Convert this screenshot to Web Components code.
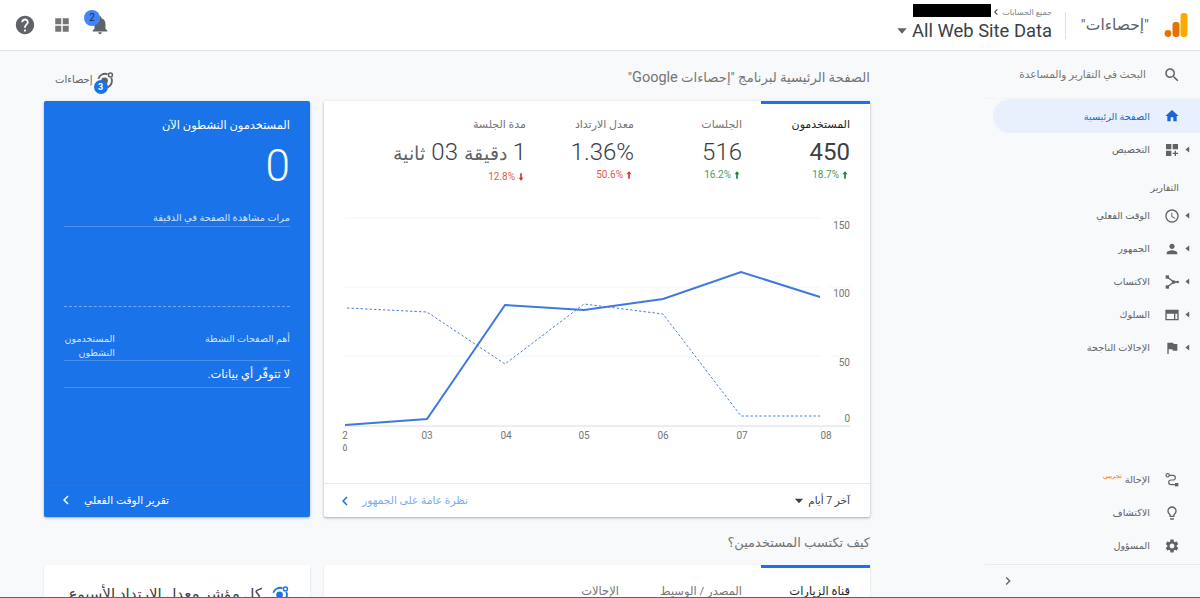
<!DOCTYPE html>
<html lang="ar" dir="rtl">
<head>
<meta charset="utf-8">
<title>Analytics</title>
<style>
  html, body { margin: 0; height: 100%; overflow: hidden; }
  body { font-family: Roboto, "DejaVu Sans", sans-serif; color: #5f6368; background: #f8f9fa; }
</style>
</head>
<body>
<ga-app></ga-app>

<script>
const ICONS = {
  help: '<path d="M12 2C6.48 2 2 6.48 2 12s4.48 10 10 10 10-4.48 10-10S17.52 2 12 2zm1 17h-2v-2h2v2zm2.07-7.75l-.9.92C13.45 12.9 13 13.5 13 15h-2v-.5c0-1.1.45-2.1 1.17-2.83l1.24-1.26c.37-.36.59-.86.59-1.41 0-1.1-.9-2-2-2s-2 .9-2 2H8c0-2.21 1.79-4 4-4s4 1.79 4 4c0 .88-.36 1.68-.93 2.25z"/>',
  apps: '<path d="M3 3h8v8H3zM13 3h8v8h-8zM3 13h8v8H3zM13 13h8v8h-8z"/>',
  bell: '<path d="M12 22c1.1 0 2-.9 2-2h-4c0 1.1.89 2 2 2zm6-6v-5c0-3.07-1.64-5.64-4.5-6.32V4c0-.83-.67-1.5-1.5-1.5s-1.5.67-1.5 1.5v.68C7.63 5.36 6 7.92 6 11v5l-2 2v1h16v-1l-2-2z"/>',
  search: '<path d="M15.5 14h-.79l-.28-.27C15.41 12.59 16 11.11 16 9.5 16 5.91 13.09 3 9.5 3S3 5.91 3 9.5 5.91 16 9.5 16c1.61 0 3.09-.59 4.23-1.57l.27.28v.79l5 4.99L20.49 19l-4.99-5zm-6 0C7.01 14 5 11.99 5 9.5S7.01 5 9.5 5 14 7.01 14 9.5 11.99 14 9.5 14z"/>',
  home: '<path d="M10 20v-6h4v6h5v-8h3L12 3 2 12h3v8z"/>',
  custom: '<path d="M3 3h8v8H3zM13 3h8v8h-8zM3 13h8v8H3zM18 13h-2v3h-3v2h3v3h2v-3h3v-2h-3z"/>',
  clock: '<path d="M11.99 2C6.47 2 2 6.48 2 12s4.47 10 9.99 10C17.52 22 22 17.52 22 12S17.52 2 11.99 2zM12 20c-4.42 0-8-3.58-8-8s3.58-8 8-8 8 3.58 8 8-3.58 8-8 8zm.5-13H11v6l5.25 3.15.75-1.23-4.5-2.67z"/>',
  person: '<path d="M12 12c2.21 0 4-1.79 4-4s-1.79-4-4-4-4 1.79-4 4 1.79 4 4 4zm0 2c-2.67 0-8 1.34-8 4v2h16v-2c0-2.66-5.33-4-8-4z"/>',
  acquire: '<rect x="2.5" y="2" width="5" height="5"/><rect x="2.5" y="17" width="5" height="5"/><circle cx="14.5" cy="12" r="2.8"/><circle cx="20.5" cy="12" r="2"/><path d="M5 4.5l9.5 7.5L5 19.5M14.5 12h6" fill="none" stroke="currentColor" stroke-width="2"/>',
  behavior: '<path d="M2 4h20v16H2zM4 10v8h11v-8zM17 10v8h3v-8z" fill-rule="evenodd"/>',
  flag: '<path d="M14.4 6L14 4H5v17h2v-7h5.6l.4 2h7V6z"/>',
  route: '<circle cx="5.5" cy="5" r="2.5" fill="none" stroke="currentColor" stroke-width="1.8"/><rect x="16.5" y="16.5" width="5" height="5"/><path d="M8 5h5.5a3.5 3.5 0 0 1 0 7h-3a3.5 3.5 0 0 0 0 7h6" fill="none" stroke="currentColor" stroke-width="1.8"/>',
  bulb: '<path d="M9 21c0 .55.45 1 1 1h4c.55 0 1-.45 1-1v-1H9v1zm3-19C8.14 2 5 5.14 5 9c0 2.38 1.19 4.47 3 5.74V17c0 .55.45 1 1 1h6c.55 0 1-.45 1-1v-2.26c1.81-1.27 3-3.36 3-5.74 0-3.86-3.14-7-7-7zm2.85 11.1l-.85.6V16h-4v-2.3l-.85-.6C7.8 12.16 7 10.63 7 9c0-2.76 2.24-5 5-5s5 2.24 5 5c0 1.63-.8 3.16-2.15 4.1z"/>',
  gear: '<path d="M19.14 12.94c.04-.3.06-.61.06-.94 0-.32-.02-.64-.07-.94l2.03-1.58c.18-.14.23-.41.12-.61l-1.92-3.32c-.12-.22-.37-.29-.59-.22l-2.39.96c-.5-.38-1.03-.7-1.62-.94l-.36-2.54c-.04-.24-.24-.41-.48-.41h-3.84c-.24 0-.43.17-.47.41l-.36 2.54c-.59.24-1.13.57-1.62.94l-2.39-.96c-.22-.08-.47 0-.59.22L2.74 8.87c-.12.21-.08.47.12.61l2.03 1.58c-.05.3-.09.63-.09.94s.02.64.07.94l-2.03 1.58c-.18.14-.23.41-.12.61l1.92 3.32c.12.22.37.29.59.22l2.39-.96c.5.38 1.03.7 1.62.94l.36 2.54c.05.24.24.41.48.41h3.84c.24 0 .44-.17.47-.41l.36-2.54c.59-.24 1.13-.56 1.62-.94l2.39.96c.22.08.47 0 .59-.22l1.92-3.32c.12-.22.07-.47-.12-.61l-2.01-1.58zM12 15.6c-1.98 0-3.6-1.62-3.6-3.6s1.62-3.6 3.6-3.6 3.6 1.62 3.6 3.6-1.62 3.6-3.6 3.6z"/>',
  left: '<path d="M15.4 7.4L14 6l-6 6 6 6 1.4-1.4L10.8 12z"/>',
  right: '<path d="M8.6 16.6L10 18l6-6-6-6-1.4 1.4L13.2 12z"/>',
  caret: '<path d="M5 8h14l-7 8z"/>',
  up: '<path d="M12 3l6 7h-4v11h-4V10H6z"/>',
  down: '<path d="M12 21l-6-7h4V3h4v11h4z"/>',
  insight: '<circle cx="11.5" cy="13" r="4"/><path d="M4 10.5A8.5 8.5 0 0 1 15 5M19.5 9.5A8.5 8.5 0 0 1 9 21" fill="none" stroke="currentColor" stroke-width="2.2"/><circle cx="18.5" cy="6" r="2.4" fill="none" stroke="currentColor" stroke-width="1.8"/>'
};

class GaIcon extends HTMLElement {
  constructor() {
    super();
    this.attachShadow({ mode: "open" });
  }
  connectedCallback() {
    const size = this.getAttribute("size") || "24";
    this.shadowRoot.innerHTML = `
      <style>
        :host { display: inline-flex; flex: none; width: ${size}px; height: ${size}px; }
        svg { width: 100%; height: 100%; fill: currentColor; display: block; }
      </style>
      <svg viewBox="0 0 24 24">${ICONS[this.getAttribute("name")] || ""}</svg>`;
  }
}

class GaHeader extends HTMLElement {
  constructor() {
    super();
    this.attachShadow({ mode: "open" });
    this.shadowRoot.innerHTML = `
      <style>
        :host { display: flex; align-items: center; height: 50px; background: #fff; border-bottom: 1px solid #dfe1e5; padding: 0 12px 0 14px; color: #5f6368; }
        .logo { width: 24px; height: 26px; margin-left: 15px; flex: none; }
        .product { font-size: 15.5px; color: #5f6368; width: 70px; white-space: nowrap; margin-left: 13px; margin-top: -1px; }
        .sep { width: 1px; height: 27px; background: #e0e0e0; margin-left: 13px; }
        .view { display: flex; flex-direction: column; height: 50px; }
        .crumb { display: flex; align-items: center; height: 13px; margin-top: 4px; font-size: 8px; color: #80868b; }
        .crumb span { margin-top: 3px; }
        .crumb i { display: block; width: 78px; height: 13px; background: #000; margin-right: -1px; }
        .crumb ga-icon { color: #3c4043; margin-top: 3px; }
        .name { display: flex; align-items: center; font-size: 18.4px; color: #3c4043; line-height: 22px; margin-top: 3px; white-space: nowrap; }
        .name span { direction: ltr; }
        .name ga-icon { color: #5f6368; margin-right: 2px; }
        .tools { margin-right: auto; display: flex; align-items: center; direction: ltr; }
        .tools ga-icon { color: #5f6368; }
        .bell { position: relative; margin-left: 17px; width: 24px; height: 24px; }
        .bell b { position: absolute; top: -3px; left: -4px; width: 16px; height: 16px; border-radius: 50%; background: #4285f4; color: #1a2a55; font: 400 10px/15px Roboto, sans-serif; text-align: center; }
      </style>
      <svg class="logo" viewBox="0 0 24 26">
        <rect x="16.5" y="1" width="7" height="24" rx="3" fill="#f9ab00"/>
        <rect x="8.5" y="10" width="7" height="15" rx="3" fill="#e37400"/>
        <circle cx="4" cy="21.5" r="3.4" fill="#e37400"/>
      </svg>
      <div class="product">"إحصاءات"</div>
      <div class="sep"></div>
      <div class="view">
        <div class="crumb"><span>جميع الحسابات</span><ga-icon name="left" size="12"></ga-icon><i></i></div>
        <div class="name"><span>All Web Site Data</span><ga-icon name="caret" size="16"></ga-icon></div>
      </div>
      <div class="tools">
        <ga-icon name="help" size="22"></ga-icon>
        <ga-icon name="apps" size="18" style="margin-left:17px;color:#757575"></ga-icon>
        <div class="bell"><ga-icon name="bell" size="22" style="margin:1px 0 0 1px"></ga-icon><b>2</b></div>
      </div>`;
  }
}

class GaNavItem extends HTMLElement {
  constructor() {
    super();
    this.attachShadow({ mode: "open" });
  }
  connectedCallback() {
    const a = (n) => this.getAttribute(n);
    const arrow = this.hasAttribute("expand") ? `<svg class="arrow" viewBox="0 0 6 8"><path d="M5 0.5v7L0.5 4z"/></svg>` : "";
    this.shadowRoot.innerHTML = `
      <style>
        :host { display: flex; align-items: center; height: 33px; position: relative; font-size: 9.7px; color: #5f6368; white-space: nowrap; padding-right: 20px; --ic: #5f6368; }
        :host([active]) { height: 34px; margin-left: 8px; background: #e8f0fe; border-radius: 17px 0 0 17px; color: #1967d2; --ic: #1967d2; }
        ga-icon { color: var(--ic); margin-left: 14px; }
        .arrow { position: absolute; right: 10px; top: 13px; width: 5px; height: 7px; fill: #5f6368; }
        sup { font-size: 6.5px; color: #e8710a; margin-right: 3px; position: relative; top: -4px; line-height: 0; vertical-align: baseline; }
      </style>
      ${arrow}<ga-icon name="${a("icon")}" size="16"></ga-icon><span><slot></slot></span>${a("tag") ? `<sup>${a("tag")}</sup>` : ""}`;
  }
}

class GaNav extends HTMLElement {
  constructor() {
    super();
    this.attachShadow({ mode: "open" });
    this.shadowRoot.innerHTML = `
      <style>
        :host { display: flex; flex-direction: column; width: 215px; flex: none; height: 546px; box-sizing: border-box; }
        .search { display: flex; align-items: center; height: 47px; padding: 1px 19px 0 0; font-size: 10.5px; color: #757575; border-bottom: 1px solid #f1f3f4; white-space: nowrap; margin-top: -1px; }
        .search ga-icon { color: #5f6368; margin-left: 17px; }
        .label { font-size: 9.5px; color: #5f6368; margin: 14px 21px 3px 0; height: 16px; line-height: 16px; }
        .bottom { margin-top: auto; }
        .collapse { border-top: 1px solid #e8eaed; height: 32px; display: flex; align-items: center; padding-left: 15px; margin-top: 2px; color: #5f6368; }
        .collapse ga-icon { margin-right: auto; }
      </style>
      <div class="search"><ga-icon name="search" size="18"></ga-icon><span>البحث في التقارير والمساعدة</span></div>
      <ga-nav-item icon="home" active>الصفحة الرئيسية</ga-nav-item>
      <ga-nav-item icon="custom" expand>التخصيص</ga-nav-item>
      <div class="label">التقارير</div>
      <ga-nav-item icon="clock" expand>الوقت الفعلي</ga-nav-item>
      <ga-nav-item icon="person" expand>الجمهور</ga-nav-item>
      <ga-nav-item icon="acquire" expand>الاكتساب</ga-nav-item>
      <ga-nav-item icon="behavior" expand>السلوك</ga-nav-item>
      <ga-nav-item icon="flag" expand>الإحالات الناجحة</ga-nav-item>
      <div class="bottom">
        <ga-nav-item icon="route" tag="تجريبي">الإحالة</ga-nav-item>
        <ga-nav-item icon="bulb">الاكتشاف</ga-nav-item>
        <ga-nav-item icon="gear">المسؤول</ga-nav-item>
        <div class="collapse"><ga-icon name="right" size="16"></ga-icon></div>
      </div>`;
  }
}

class GaMetric extends HTMLElement {
  constructor() {
    super();
    this.attachShadow({ mode: "open" });
  }
  connectedCallback() {
    const a = (n) => this.getAttribute(n);
    const colour = a("tone") === "up" ? "#188038" : "#d93025";
    this.shadowRoot.innerHTML = `
      <style>
        :host { display: block; width: 108px; flex: none; white-space: nowrap; }
        .label { font-size: 11px; line-height: 16px; height: 16px; color: #757575; }
        :host([selected]) .label { color: #202124; font-weight: 500; }
        .value { font-size: 24px; font-weight: 300; line-height: 28px; margin-top: 5px; color: #3c4043; }
        :host([selected]) .value { font-weight: 400; color: #3c4043; }
        .delta { display: flex; align-items: center; font-size: 10px; line-height: 12px; margin-top: 3px; color: ${colour}; }
        .delta span { opacity: .8; }
        .delta ga-icon { margin-left: 1px; }
      </style>
      <div class="label">${a("label")}</div>
      <div class="value"><slot></slot></div>
      <div class="delta"><ga-icon name="${a("arrow")}" size="10"></ga-icon><span>${a("delta")}</span></div>`;
  }
}

class GaChart extends HTMLElement {
  constructor() {
    super();
    this.attachShadow({ mode: "open" });
    // coordinates are page pixels, the viewBox shifts them to the card
    const solid = [[345,425],[427,419],[505,305],[584,310],[663,299],[741,272],[820,297]];
    const dashed = [[347,308],[427,312],[505,364],[584,304],[663,314],[741,416],[820,416]];
    const toPts = (l) => l.map((p) => p.join(",")).join(" ");
    const grid = [218, 287, 356].map((y) => `<line x1="345" x2="821" y1="${y}" y2="${y}" stroke="#f1f3f4"/>
      <line x1="830" x2="850" y1="${y}" y2="${y}" stroke="#f1f3f4"/>`).join("");
    const yLabels = [["150",225],["100",293],["50",362],["0",418]].map(([t, y]) =>
      `<text x="850" y="${y + 4}" text-anchor="end">${t}</text>`).join("");
    const xLabels = [["03",427],["04",506],["05",584],["06",663],["07",742],["08",826]].map(([t, x]) =>
      `<text x="${x}" y="439" text-anchor="middle">${t}</text>`).join("");
    this.shadowRoot.innerHTML = `
      <style>
        :host { display: block; height: 284px; }
        svg { display: block; width: 546px; height: 284px; }
        text { font: 10px Roboto, "DejaVu Sans", sans-serif; fill: #757575; direction: ltr; }
      </style>
      <svg viewBox="324 199 546 284">
        ${grid}
        <line x1="345" x2="850" y1="426" y2="426" stroke="#dadce0"/>
        ${[345,427,506,584,663,742,821].map((x) => `<line x1="${x}" x2="${x}" y1="426" y2="429" stroke="#e8eaed"/>`).join("")}
        <polyline points="${toPts(dashed)}" fill="none" stroke="#4a7fd6" stroke-width="1" stroke-dasharray="2.5 2"/>
        <polyline points="${toPts(solid)}" fill="none" stroke="#4178e0" stroke-width="2"/>
        ${yLabels}
        <text x="345" y="439" text-anchor="middle">2</text>
        <text x="345" y="451" text-anchor="middle">٥</text>
        ${xLabels}
      </svg>`;
  }
}

class GaAudienceCard extends HTMLElement {
  constructor() {
    super();
    this.attachShadow({ mode: "open" });
    this.shadowRoot.innerHTML = `
      <style>
        :host { display: flex; flex-direction: column; background: #fff; height: 416px; box-shadow: 0 1px 2px rgba(60,64,67,.3), 0 1px 3px 1px rgba(60,64,67,.1); border-radius: 2px; position: relative; }
        .tab { position: absolute; top: 0; right: 0; width: 109px; height: 3px; background: #1a73e8; }
        .metrics { display: flex; padding: 16px 20px 0 0; height: 99px; box-sizing: border-box; }
        small { font-size: 18.5px; color: #5f6368; }
        .foot { height: 33px; border-top: 1px solid #e8eaed; display: flex; align-items: center; padding: 0 20px 0 12px; font-size: 10.5px; color: #3c4043; white-space: nowrap; }
        .range { display: flex; align-items: center; gap: 2px; }
        .range ga-icon { color: #3c4043; }
        .link { margin-right: auto; display: flex; align-items: center; gap: 8px; color: #7baaf7; font-size: 10.7px; }
        .link ga-icon { color: #1a73e8; }
      </style>
      <div class="tab"></div>
      <div class="metrics">
        <ga-metric selected label="المستخدمون" delta="18.7%" arrow="up" tone="up">450</ga-metric>
        <ga-metric label="الجلسات" delta="16.2%" arrow="up" tone="up">516</ga-metric>
        <ga-metric label="معدل الارتداد" delta="50.6%" arrow="up" tone="bad">1.36%</ga-metric>
        <ga-metric label="مدة الجلسة" delta="12.8%" arrow="down" tone="bad">1 <small>دقيقة</small> 03 <small>ثانية</small></ga-metric>
      </div>
      <ga-chart></ga-chart>
      <div class="foot">
        <div class="range"><span>آخر 7 أيام</span><ga-icon name="caret" size="14"></ga-icon></div>
        <div class="link"><span>نظرة عامة على الجمهور</span><ga-icon name="left" size="18"></ga-icon></div>
      </div>`;
  }
}

class GaRealtimeCard extends HTMLElement {
  constructor() {
    super();
    this.attachShadow({ mode: "open" });
    this.shadowRoot.innerHTML = `
      <style>
        :host { display: flex; flex-direction: column; background: #1a73e8; color: #fff; height: 416px; box-sizing: border-box; padding: 15px 20px 0; box-shadow: 0 1px 2px rgba(60,64,67,.3), 0 1px 3px 1px rgba(60,64,67,.1); border-radius: 2px; }
        .title { font-size: 11.4px; line-height: 18px; white-space: nowrap; }
        .count { font-size: 44px; font-weight: 300; line-height: 50px; margin-top: 7px; }
        .permin { font-size: 9.8px; line-height: 14px; margin-top: 20px; padding-bottom: 1px; color: #d2e3fc; border-bottom: 1px solid #4d90ec; white-space: nowrap; }
        .spark { height: 0; border-top: 1px dashed #8ab4f8; margin-top: 79px; opacity: .8; }
        .cols { display: flex; justify-content: space-between; font-size: 9.5px; line-height: 14px; color: #d2e3fc; margin-top: 25px; padding-bottom: 1px; border-bottom: 1px solid #4d90ec; height: 27px; }
        .cols div:last-child { width: 51px; }
        .empty { font-size: 11.5px; line-height: 26px; border-bottom: 1px solid #4d90ec; white-space: nowrap; }
        .foot { margin: auto -20px 0; border-top: 1px solid #1e6fd9; height: 34px; display: flex; align-items: center; padding-left: 13px; font-size: 10.7px; white-space: nowrap; }
        .foot a { margin-right: auto; display: flex; align-items: center; gap: 9px; }
      </style>
      <div class="title">المستخدمون النشطون الآن</div>
      <div class="count">0</div>
      <div class="permin">مرات مشاهدة الصفحة في الدقيقة</div>
      <div class="spark"></div>
      <div class="cols"><div>أهم الصفحات النشطة</div><div>المستخدمون النشطون</div></div>
      <div class="empty">لا تتوفّر أي بيانات.</div>
      <div class="foot"><a><span>تقرير الوقت الفعلي</span><ga-icon name="left" size="18"></ga-icon></a></div>`;
  }
}

class GaAcquisitionCard extends HTMLElement {
  constructor() {
    super();
    this.attachShadow({ mode: "open" });
    this.shadowRoot.innerHTML = `
      <style>
        :host { display: block; background: #fff; height: 120px; position: relative; box-shadow: 0 1px 2px rgba(60,64,67,.2); border-radius: 2px; }
        .tab { position: absolute; top: 0; right: 0; width: 109px; height: 3px; background: #1a73e8; }
        .tabs { display: flex; padding: 19px 20px 0 0; font-size: 11.5px; color: #757575; white-space: nowrap; }
        .tabs span { width: 108px; }
        .tabs span:nth-child(2) { width: 123px; }
        .tabs span:first-child { color: #202124; font-weight: 500; }
      </style>
      <div class="tab"></div>
      <div class="tabs"><span>قناة الزيارات</span><span>المصدر / الوسيط</span><span>الإحالات</span></div>`;
  }
}

class GaInsightCard extends HTMLElement {
  constructor() {
    super();
    this.attachShadow({ mode: "open" });
    this.shadowRoot.innerHTML = `
      <style>
        :host { display: block; background: #fff; height: 120px; box-shadow: 0 1px 2px rgba(60,64,67,.2); border-radius: 2px; }
        .row { display: flex; align-items: center; gap: 8px; padding: 18px 20px 0 0; font-size: 15px; line-height: 22px; color: #3c4043; white-space: nowrap; }
        ga-icon { color: #1a73e8; }
      </style>
      <div class="row"><ga-icon name="insight" size="20"></ga-icon><span>كل مؤشر معدل الارتداد الأسبوع</span></div>`;
  }
}

class GaSectionTitle extends HTMLElement {
  constructor() {
    super();
    this.attachShadow({ mode: "open" });
    this.shadowRoot.innerHTML = `
      <style>
        :host { display: flex; align-items: center; font-size: 13px; color: #757575; white-space: nowrap; }
      </style>
      <span><slot></slot></span>`;
  }
}

class GaInsightsLink extends HTMLElement {
  constructor() {
    super();
    this.attachShadow({ mode: "open" });
    this.shadowRoot.innerHTML = `
      <style>
        :host { display: flex; align-items: center; justify-content: flex-end; padding-left: 9px; font-size: 10px; color: #5f6368; white-space: nowrap; }
        .ic { position: relative; width: 20px; height: 20px; margin-left: 2px; color: #5f6368; }
        b { position: absolute; left: -1px; bottom: -4px; width: 14px; height: 14px; border-radius: 50%; background: #1a73e8; color: #fff; font: 700 9px/14px Roboto, sans-serif; text-align: center; }
      </style>
      <div class="ic"><ga-icon name="insight" size="20"></ga-icon><b>3</b></div><span>إحصاءات</span>`;
  }
}

class GaApp extends HTMLElement {
  constructor() {
    super();
    this.attachShadow({ mode: "open" });
    this.shadowRoot.innerHTML = `
      <style>
        :host { display: flex; flex-direction: column; height: 598px; overflow: hidden; box-sizing: border-box; border-bottom: 1px solid #5f6368; background: #f8f9fa; }
        .body { display: flex; flex: 1; min-height: 0; }
        main { flex: 1; display: grid; grid-template-columns: 546px 266px; grid-template-rows: 50px 416px 48px 120px; column-gap: 14px; padding: 0 115px 0 44px; justify-content: start; overflow: hidden; }
        .t { padding-top: 3px; }
        .first { font-size: 13.2px; }
        .link { padding-top: 7px; padding-left: 11px; }
        .g { font-size: 14.5px; }
      </style>
      <ga-header></ga-header>
      <div class="body">
        <ga-nav></ga-nav>
        <main>
          <ga-section-title class="t first">الصفحة الرئيسية لبرنامج "إحصاءات <span class="g">Google</span>"</ga-section-title>
          <ga-insights-link class="link"></ga-insights-link>
          <ga-audience-card></ga-audience-card>
          <ga-realtime-card></ga-realtime-card>
          <ga-section-title class="t">كيف تكتسب المستخدمين؟</ga-section-title>
          <div></div>
          <ga-acquisition-card></ga-acquisition-card>
          <ga-insight-card></ga-insight-card>
        </main>
      </div>`;
  }
}

customElements.define("ga-icon", GaIcon);
customElements.define("ga-header", GaHeader);
customElements.define("ga-nav-item", GaNavItem);
customElements.define("ga-nav", GaNav);
customElements.define("ga-metric", GaMetric);
customElements.define("ga-chart", GaChart);
customElements.define("ga-audience-card", GaAudienceCard);
customElements.define("ga-realtime-card", GaRealtimeCard);
customElements.define("ga-acquisition-card", GaAcquisitionCard);
customElements.define("ga-insight-card", GaInsightCard);
customElements.define("ga-section-title", GaSectionTitle);
customElements.define("ga-insights-link", GaInsightsLink);
customElements.define("ga-app", GaApp);
</script>
</body>
</html>
